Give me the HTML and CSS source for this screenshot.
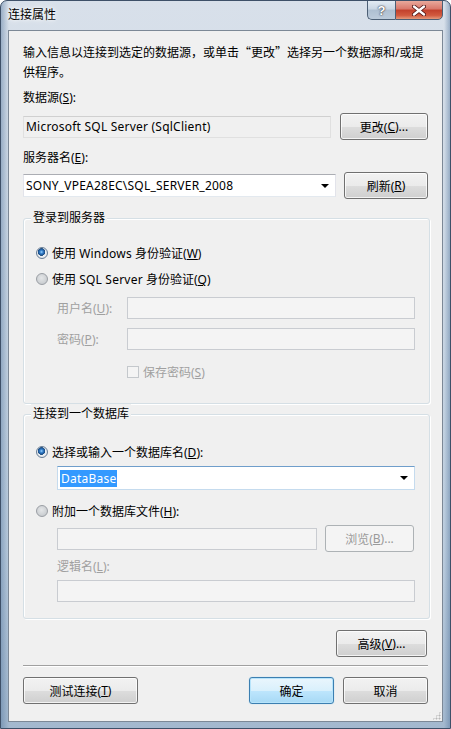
FILE: index.html
```html
<!DOCTYPE html>
<html lang="zh-CN">
<head>
<meta charset="utf-8">
<title>连接属性</title>
<link rel="stylesheet" href="styles.css">
</head>
<body>
<div class="window">
  <div class="titlebar">
    <span class="title">连接属性</span>
    <div class="caption">
      <div class="cap help">?</div>
      <div class="cap close">
        <svg width="14" height="11" viewBox="0 0 14 11"><path d="M2 1.5 L12 9.5 M12 1.5 L2 9.5" stroke="#4a1010" stroke-width="4" stroke-linecap="round"/><path d="M2 1.5 L12 9.5 M12 1.5 L2 9.5" stroke="#fff" stroke-width="2.4" stroke-linecap="round"/></svg>
      </div>
    </div>
  </div>
  <div class="client">
    <p class="desc">输入信息以连接到选定的数据源，或单击<span class="cjk">“</span>更改<span class="cjk">”</span>选择另一个数据源和/或提<br>供程序。</p>
    <div class="label l-src">数据源(<u>S</u>):</div>
    <div class="row row-src">
      <div class="tb readonly w-src"><span class="latin">Microsoft SQL Server (SqlClient)</span></div>
      <div class="btn w-change">更改(<u>C</u>)...</div>
    </div>
    <div class="label l-srv">服务器名(<u>E</u>):</div>
    <div class="row row-srv">
      <div class="combo w-srv"><span class="latin">SONY_VPEA28EC\SQL_SERVER_2008</span><i class="arrow"></i></div>
      <div class="btn w-refresh">刷新(<u>R</u>)</div>
    </div>

    <div class="group g-login">
      <div class="gtitle">登录到服务器</div>
      <div class="radio-row r-win"><span class="radio on"></span><span>使用 <span class="latin">Windows</span> 身份验证(<u>W</u>)</span></div>
      <div class="radio-row r-sql"><span class="radio"></span><span>使用 <span class="latin">SQL Server</span> 身份验证(<u>Q</u>)</span></div>
      <div class="field-row f-user"><span class="flabel dis">用户名(<u>U</u>):</span><div class="tb disabled w-cred"></div></div>
      <div class="field-row f-pass"><span class="flabel dis">密码(<u>P</u>):</span><div class="tb disabled w-cred"></div></div>
      <div class="check-row"><span class="check"></span><span class="dis">保存密码(<u>S</u>)</span></div>
    </div>

    <div class="group g-db">
      <div class="gtitle">连接到一个数据库</div>
      <div class="radio-row r-dbname"><span class="radio on"></span><span>选择或输入一个数据库名(<u>D</u>):</span></div>
      <div class="combo w-db"><span class="sel latin">DataBase</span><i class="arrow"></i></div>
      <div class="radio-row r-attach"><span class="radio"></span><span>附加一个数据库文件(<u>H</u>):</span></div>
      <div class="row row-file">
        <div class="tb disabled w-file"></div>
        <div class="btn disabled-btn w-browse">浏览(<u>B</u>)...</div>
      </div>
      <div class="label dis l-logical">逻辑名(<u>L</u>):</div>
      <div class="tb disabled w-logical"></div>
    </div>

    <div class="adv-row"><div class="btn w-adv">高级(<u>V</u>)...</div></div>
    <div class="sep"></div>
    <div class="bottom-row">
      <div class="btn w-test">测试连接(<u>T</u>)</div>
      <div class="spacer"></div>
      <div class="btn default w-ok">确定</div>
      <div class="btn w-cancel">取消</div>
    </div>
    <div class="grip"></div>
  </div>
</div>
</body>
</html>
```
FILE: styles.css
```css
* { box-sizing: border-box; }
html, body { margin: 0; padding: 0; background: #ffffff; }
body {
  font-family: "Segoe UI", "Noto Sans", "Noto Sans CJK SC", sans-serif;
  font-size: 12px;
  color: #000;
}
u { text-decoration: underline; text-underline-offset: 1px; }
.cjk { font-family: "Noto Sans CJK SC", sans-serif; }
.latin { letter-spacing: 0.22px; }

.window {
  width: 451px;
  height: 729px;
  border: 1px solid #3e5068;
  border-radius: 7px 7px 0 0;
  background:
    linear-gradient(to right, rgba(80,115,155,0.45) 0, rgba(90,120,155,0) 8px, rgba(90,120,155,0) 443px, rgba(80,115,155,0.45) 100%),
    linear-gradient(to bottom, #d8e0ea 0, #cfdae6 30%, #bccdde 75%, #a3b8ce 100%);
  display: flex;
  flex-direction: column;
  position: relative;
  overflow: hidden;
}

.titlebar {
  height: 29px;
  display: flex;
  align-items: flex-start;
  padding-left: 7px;
  padding-right: 7px;
}
.title {
  margin-top: 6px;
  line-height: 16px;
  color: #000;
  text-shadow: 0 0 6px #fff, 0 0 3px #fff;
}
.caption {
  margin-left: auto;
  margin-top: -1px;
  display: flex;
  height: 20px;
}
.cap {
  height: 20px;
  border: 1px solid #4c5f75;
  display: flex;
  align-items: center;
  justify-content: center;
}
.help {
  width: 28px;
  border-radius: 0 0 0 5px;
  border-right: none;
  background: linear-gradient(to bottom, #e3ebf3 0, #c9d6e3 45%, #aebfd1 50%, #bccbdb 100%);
  color: #fff;
  font-family: "Liberation Sans", sans-serif;
  font-weight: bold;
  font-size: 13px;
  text-shadow: 0 0 1px #333, 0 0 2px #334;
}
.close {
  width: 48px;
  border-radius: 0 0 5px 0;
  background: linear-gradient(to bottom, #e9a99c 0, #d9776a 45%, #c2402c 50%, #d25a3f 80%, #e59a7c 100%);
}

.client {
  margin: 0 7px 6px 7px;
  height: 692px;
  border: 1px solid #7c8896;
  background: #f0f0f0;
  padding: 11px 14px 0 14px;
  display: flex;
  flex-direction: column;
  position: relative;
}

.desc {
  margin: 0;
  line-height: 20px;
}
.label { line-height: 20px; height: 20px; }
.l-src { margin-top: 5px; }
.l-srv { margin-top: 8px; }

.row { display: flex; align-items: center; }
.row-src { margin-top: 5px; height: 27px; justify-content: space-between; }
.row-srv { margin-top: 4px; height: 27px; justify-content: space-between; }

.tb {
  height: 22px;
  border: 1px solid #e2e3ea;
  border-top-color: #abadb3;
  border-bottom-color: #e3e9ef;
  background: #fff;
  line-height: 20px;
  padding-left: 2px;
  white-space: nowrap;
}
.readonly {
  background: #f0f0f0;
  border-color: #e0e0e0;
  border-top-color: #d0d0d0;
}
.disabled {
  background: #f4f4f4;
  border: 1px solid #c9ccd1;
}
.w-src { width: 308px; }

.combo {
  display: flex;
  align-items: center;
  background: #fff;
  border: 1px solid #e2e3ea;
  border-top-color: #abadb3;
  border-bottom-color: #e3e9ef;
  padding-left: 2px;
  padding-right: 6px;
  white-space: nowrap;
}
.combo .arrow {
  margin-left: auto;
  width: 0;
  height: 0;
  border-left: 4px solid transparent;
  border-right: 4px solid transparent;
  border-top: 4px solid #000;
}
.w-srv { width: 313px; height: 23px; }

.btn {
  height: 27px;
  border: 1px solid #707070;
  border-radius: 3px;
  background: linear-gradient(to bottom, #f2f2f2 0, #ebebeb 50%, #dddddd 51%, #cfcfcf 100%);
  box-shadow: inset 0 0 0 1px rgba(255,255,255,0.75);
  display: flex;
  align-items: center;
  justify-content: center;
  white-space: nowrap;
}
.default {
  border-color: #3c7fb1;
  background: linear-gradient(to bottom, #eaf6fd 0, #d9f0fc 50%, #bee6fd 51%, #a7d9f5 100%);
  box-shadow: inset 0 0 0 1px #b7e4fb, 0 0 1px #79c8f0;
}
.disabled-btn {
  border-color: #adb2b5;
  background: #f4f4f4;
  box-shadow: none;
  color: #9a9a9a;
}
.w-change { width: 88px; }
.w-refresh { width: 84px; }

.group {
  margin-right: -2px;
  border: 1px solid #d5dfe5;
  box-shadow: inset 1px 1px 0 #fff, 1px 1px 0 #fff;
  border-radius: 3px;
  display: flex;
  flex-direction: column;
  padding-left: 12px;
}
.g-login { margin-top: 19px; height: 186px; }
.g-db { margin-top: 10px; height: 205px; }
.gtitle {
  margin-top: -11px;
  margin-left: -5px;
  align-self: flex-start;
  background: #f0f0f0;
  padding: 0 2px;
  line-height: 20px;
}

.radio-row { display: flex; align-items: center; height: 20px; gap: 4px; }
.r-win { margin-top: 15px; }
.r-sql { margin-top: 6px; }
.r-dbname { margin-top: 18px; }
.r-attach { margin-top: 11px; }

.radio {
  width: 12px;
  height: 12px;
  border-radius: 50%;
  border: 1px solid #9a9ea4;
  background: radial-gradient(circle at 45% 40%, #e4e6e8 0, #d0d3d6 55%, #bfc3c7 100%);
}
.radio.on {
  border-color: #6a7e95;
  background:
    radial-gradient(circle at 45% 40%, #9fd4ff 0, #3a86cf 1.5px, #1d5597 3px, #22507e 3.6px, rgba(0,0,0,0) 4px),
    radial-gradient(circle, #ffffff 0, #e8ecf0 60%, #c8d0d8 100%);
}

.dis { color: #a0a0a0; }

.field-row { display: flex; align-items: center; padding-left: 21px; height: 22px; }
.flabel { width: 70px; }
.f-user { margin-top: 8px; }
.f-pass { margin-top: 9px; }
.w-cred { width: 288px; }

.check-row {
  display: flex;
  align-items: center;
  height: 20px;
  gap: 4px;
  margin-top: 12px;
  padding-left: 91px;
}
.check {
  width: 12px;
  height: 12px;
  border: 1px solid #c4c8cc;
  background: #f4f4f4;
}

.w-db {
  margin-top: 4px;
  margin-left: 21px;
  width: 358px;
  height: 24px;
  border-color: #c5dbee;
  border-top-color: #6f9ecb;
  padding-left: 2px;
}
.sel {
  background: #3399ff;
  color: #fff;
  padding: 0 1px;
  line-height: 17px;
}

.row-file { margin-top: 4px; height: 27px; padding-left: 21px; }
.w-file { width: 260px; }
.w-browse { width: 89px; margin-left: 8px; }
.l-logical { margin-top: 5px; padding-left: 21px; }
.w-logical { margin-top: 3px; margin-left: 21px; width: 358px; }

.adv-row { display: flex; justify-content: flex-end; margin-top: 11px; }
.w-adv { width: 91px; margin-right: 1px; }

.sep {
  margin-top: 8px;
  height: 2px;
  border-top: 1px solid #a0a0a0;
  border-bottom: 1px solid #ffffff;
}

.bottom-row { display: flex; margin-top: 10px; gap: 9px; }
.spacer { flex: 1; }
.w-test { width: 115px; }
.w-ok { width: 85px; }
.w-cancel { width: 85px; }

.grip {
  position: absolute;
  right: 1px;
  bottom: 1px;
  width: 9px;
  height: 9px;
  background:
    radial-gradient(circle, #b8b8b8 0.8px, rgba(0,0,0,0) 1.2px) 0 0 / 3px 3px;
  clip-path: polygon(100% 0, 100% 100%, 0 100%);
}
```
